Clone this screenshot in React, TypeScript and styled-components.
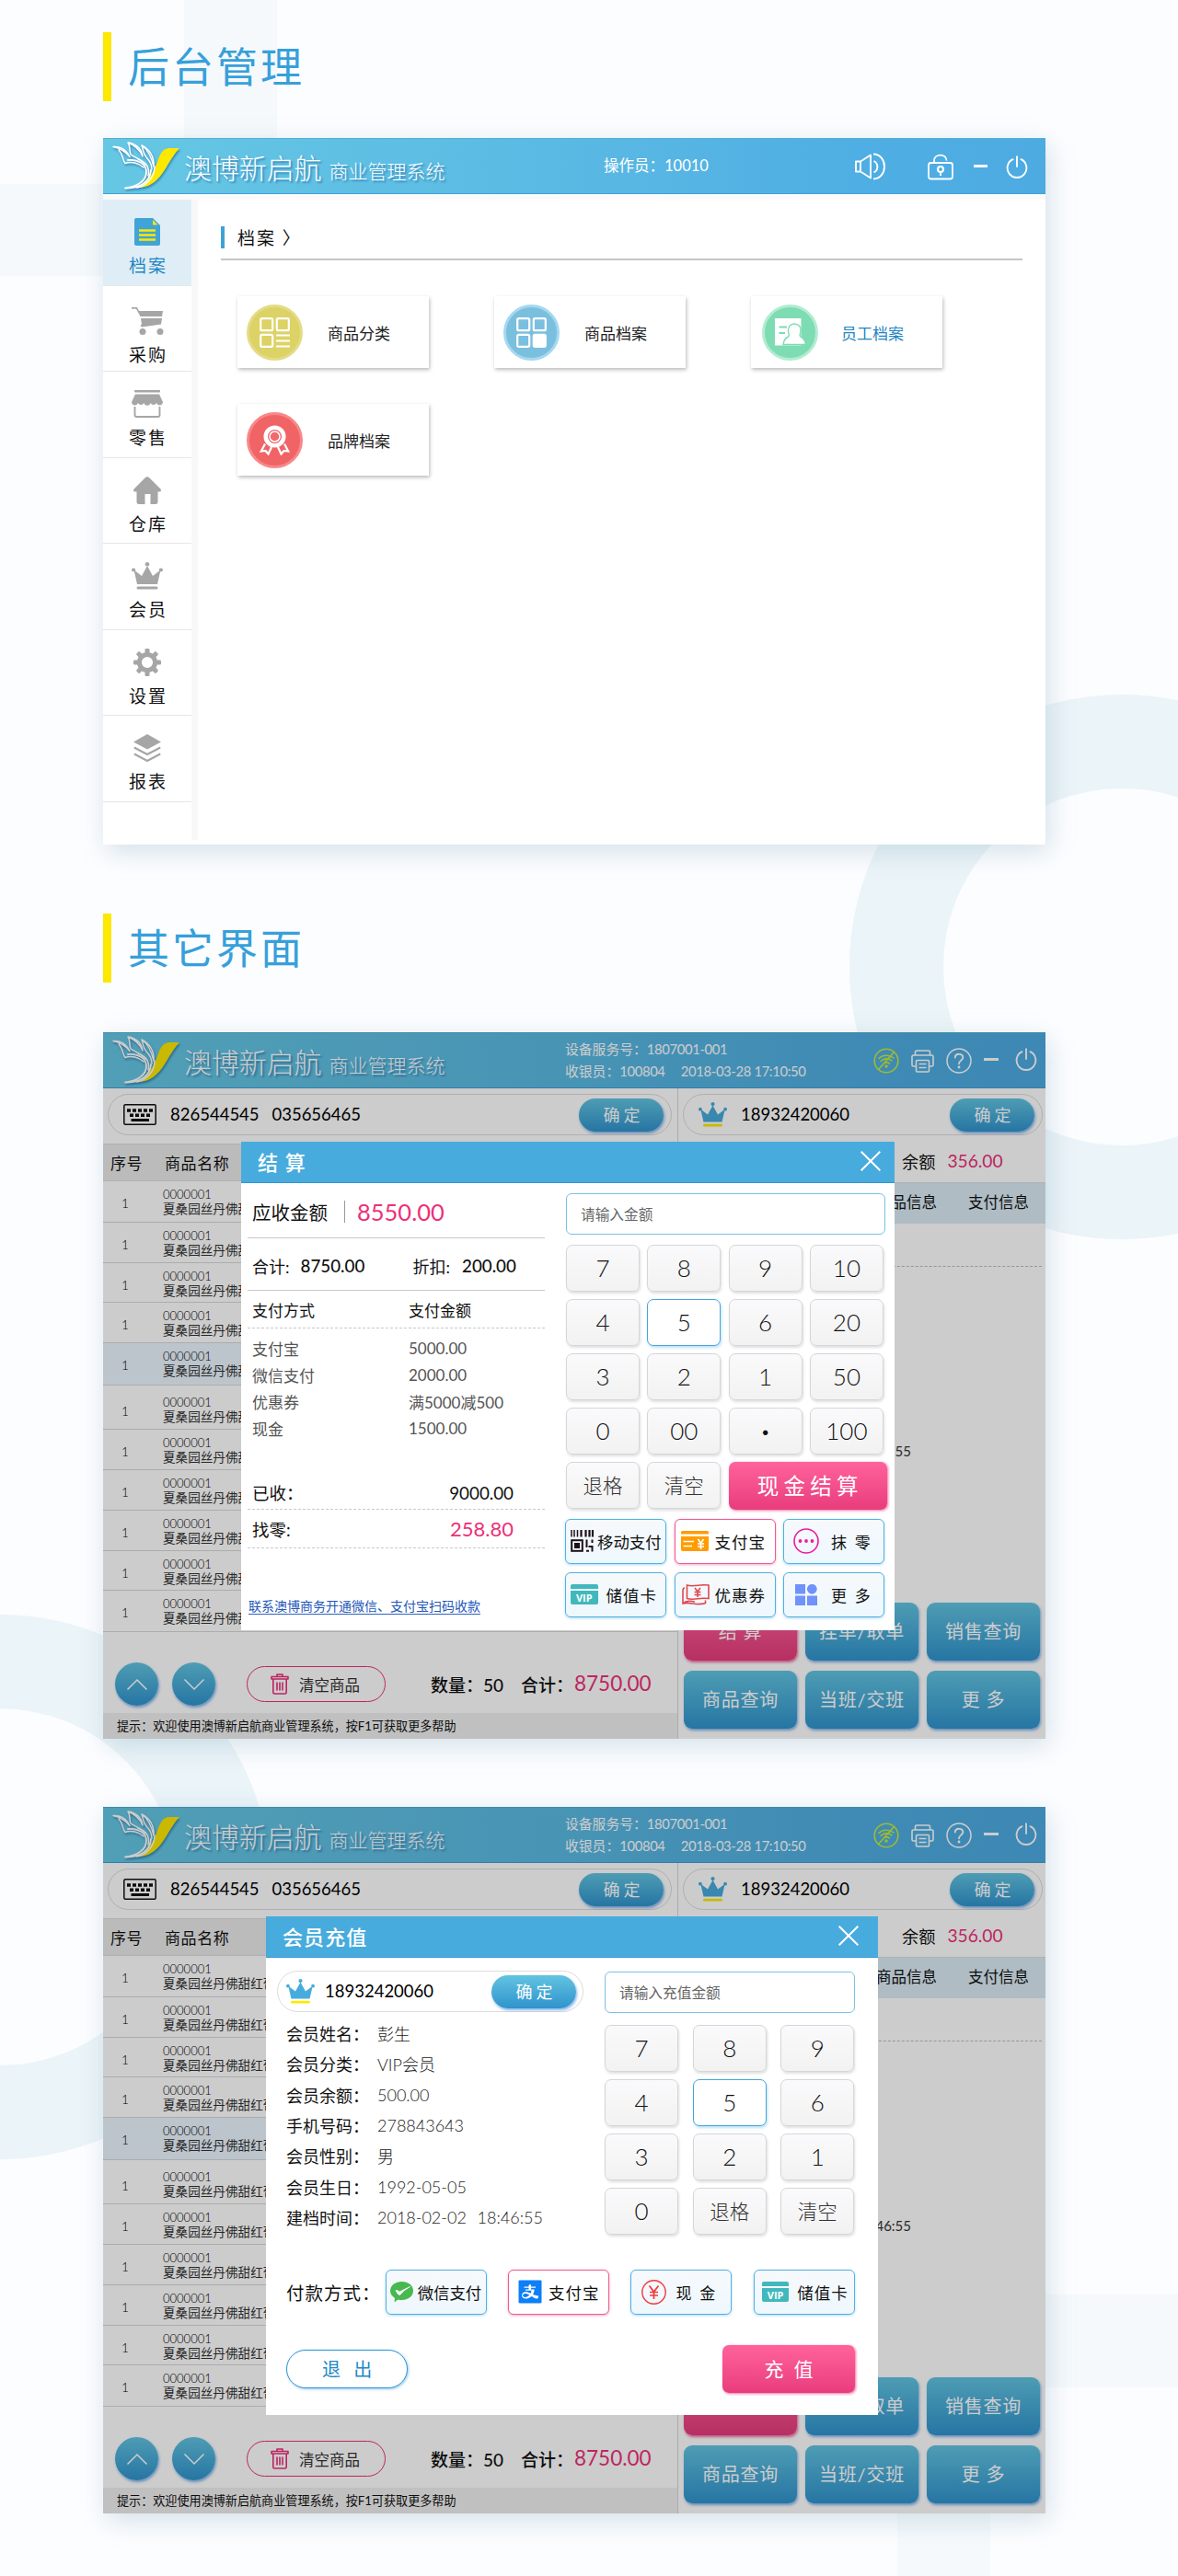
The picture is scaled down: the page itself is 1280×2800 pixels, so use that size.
import React from 'react';
import styled, { createGlobalStyle, css } from 'styled-components';
import { AiFillAlipaySquare } from 'react-icons/ai';

const blue = '#48abdd';
const pink = '#ee2f78';
const grey = '#a6a6a6';
const fonts = `Lato, 'Noto Sans CJK SC', sans-serif`;

const GlobalStyle = createGlobalStyle`
    * { box-sizing: border-box; }
    body {
        margin: 0;
        background: #fcfdff;
        font-family: ${fonts};
        font-weight: 400;
        color: #111;
    }
    svg { display: block; flex: none; }
`;

/* ---------- page ---------- */

const Page = styled.div`
    position: relative;
    width: 1280px;
    height: 2800px;
    padding: 35px 144px 0 112px;
    overflow: hidden;
`;

const Ring = styled.div<{ $x: number; $y: number }>`
    position: absolute;
    left: ${p => p.$x - 296}px;
    top: ${p => p.$y - 296}px;
    width: 592px;
    height: 592px;
    border: 102px solid #ebf4f8;
    border-radius: 50%;
`;

const Band = styled.div<{ $x: number; $y: number; $w: number; $h: number }>`
    position: absolute;
    left: ${p => p.$x}px;
    top: ${p => p.$y}px;
    width: ${p => p.$w}px;
    height: ${p => p.$h}px;
    background: #f5f9fc;
`;

const SectionTitle = styled.h2<{ $gap: number }>`
    position: relative;
    display: flex;
    align-items: center;
    height: 75px;
    margin: 0 0 ${p => p.$gap}px;
    padding-left: 18px;
    border-left: 9px solid #fde800;
    font-size: 45px;
    font-weight: 400;
    letter-spacing: 3px;
    line-height: 70px;
    color: #36a0da;
`;

const Screen = styled.section<{ $gap: number }>`
    position: relative;
    display: flex;
    flex-direction: column;
    width: 1024px;
    height: 768px;
    margin-bottom: ${p => p.$gap}px;
    background: #fff;
    box-shadow: 4px 8px 26px rgba(110, 155, 175, 0.28);
`;

/* ---------- top bar ---------- */

const TopBar = styled.header`
    display: flex;
    flex: none;
    height: 61px;
    padding-left: 10px;
    background: linear-gradient(90deg, #66c7e4, #5ab9e3 50%, #4faee3 80%, #4dabe2);
    border-bottom: 1px solid #3d9fd8;
    border-top: 1px solid #4fb0d2;
    color: #fff;
`;

const Brand = styled.div`
    display: flex;
    align-items: baseline;
    width: 492px;
    text-shadow: 2px 2px 2px rgba(20, 90, 150, 0.55);
    line-height: 62px;
    svg { align-self: flex-start; margin-top: 3px; }
`;

const BrandName = styled.span`
    margin-left: 2px;
    font-size: 30px;
    font-weight: 300;
    letter-spacing: -0.1px;
`;

const BrandSub = styled.span`
    margin-left: 8px;
    font-size: 21px;
    font-weight: 300;
`;

const TopInfo = styled.div<{ $size?: number; $left?: number }>`
    display: flex;
    flex-direction: column;
    justify-content: center;
    width: 335px;
    padding: 0 0 2px ${p => p.$left || 0}px;
    font-size: ${p => p.$size || 15}px;
    line-height: 24px;
    white-space: pre;
    span { letter-spacing: -0.35px; }
`;

const TopIcons = styled.div<{ $offset: number }>`
    display: flex;
    align-items: center;
    height: 60px;
    margin-left: ${p => p.$offset}px;
`;

const IconSlot = styled.span<{ $ml: number; $mt?: number }>`
    margin-left: ${p => p.$ml}px;
    margin-top: ${p => p.$mt || 0}px;
`;

const Logo = () => (
    <svg width="76" height="54" viewBox="0 0 76 54" style={{ filter: 'drop-shadow(1px 2px 1px rgba(20,90,150,.55))' }}>
        <path d="M57 8.500Q59 7 62 7H73C64 17 60 27 54 35C47 45 38 50 28 50C40 43 45 33 49 22C51 16 53 11 57 8.500Z" fill="#fde800" />
        <g fill="none" stroke="#fff" strokeWidth="1.500" strokeLinejoin="round" strokeLinecap="round">
            <path d="M1 5.500C7 5 13 7 17 13L19 16.500C14 10 8 7 1 5.500ZM7 9C12 14 11 20 14 23.500C20 21 29 23 34 28" />
            <path d="M17 1C26 2 32 8 33 16C30 9 25 4 17 1ZM17 1C20 5 18 9 20 14C24 17 30 18 36 25" />
            <path d="M32 4C40 8 46 16 45 27C43 18 40 10 32 4ZM32 4C34 9 33 12 37 17C41 21 43 25 43 30" />
            <path d="M17 20C28 19 37 24 37 33C37 42 28 49 14 50.500C30 51 41 44 42 31" strokeWidth="1.900" />
            <path d="M28 19C36 22 41 28 39 37M46 27C46 38 38 48 27 50" />
        </g>
    </svg>
);

const Power = ({ size = 24 }: { size?: number }) => (
    <svg width={size} height={size + 1} viewBox="0 0 24 25" fill="none" stroke="currentColor" strokeWidth="1.900" strokeLinecap="round">
        <path d="M7.500 4.200A10.400 10.400 0 1 0 16.500 4.200M12 1.200V12" />
    </svg>
);

const Minus = ({ width = 16 }: { width?: number }) => (
    <svg width={width} height="3" viewBox="0 0 16 3" preserveAspectRatio="none"><rect width="16" height="3" fill="currentColor" /></svg>
);

const Speaker = () => (
    <svg width="34" height="30" viewBox="0 0 34 30" fill="none" stroke="#fff" strokeWidth="1.900" strokeLinejoin="round">
        <path d="M1 9.500H6V20.500H1ZM6 9.500L17 2.500V27.500L6 20.500M20.500 9A7 7 0 0 1 20.500 21.500M20 1.500C36 2 36 28 20 28.500" />
    </svg>
);

const Lock = () => (
    <svg width="28" height="29" viewBox="0 0 28 29" fill="none" stroke="#fff" strokeWidth="1.800">
        <rect x="1" y="10" width="26" height="17.500" rx="2.500" />
        <path d="M7 10V7.500C7 0 20.500-.5 20.500 7.500" />
        <circle cx="14" cy="17" r="3" strokeWidth="2.200" />
        <path d="M14 19.500V24" strokeWidth="2" />
    </svg>
);

const NoWifi = () => (
    <svg width="28" height="28" viewBox="0 0 28 28" fill="none" stroke="#c4ea3c" strokeWidth="1.600" strokeLinecap="round">
        <circle cx="14" cy="14" r="12.800" />
        <path d="M6 11.500C10 7.500 17 7 22 11M8 14.500C12 11 16.500 11 20 14M10.500 17.500C13 15.500 15.500 15.500 17.500 17M22.500 4.500L5.500 23.500" />
        <circle cx="14" cy="20" r="1" fill="#c4ea3c" />
    </svg>
);

const Printer = () => (
    <svg width="25" height="25" viewBox="0 0 25 25" fill="none" stroke="currentColor" strokeWidth="1.600" strokeLinejoin="round">
        <path d="M4.500 6V2.500Q4.500 1 6 1H19Q20.500 1 20.500 2.500V6M5 18H2.500Q1 18 1 16.500V7.500Q1 6 2.500 6H22.500Q24 6 24 7.500V16.500Q24 18 22.500 18H20" />
        <rect x="5.500" y="11.500" width="14" height="12.500" rx="1" />
        <path d="M8.500 15.500H16.500M8.500 19.500H16.500" />
    </svg>
);

const Help = () => (
    <svg width="28" height="28" viewBox="0 0 28 28" fill="none" stroke="currentColor" strokeWidth="1.500" strokeLinecap="round">
        <circle cx="14" cy="14" r="13" />
        <path d="M9.800 10.500C10 5.500 18.300 5.700 18.300 10.500C18.300 13.500 14 13.800 14 17.200" strokeWidth="1.900" />
        <circle cx="14" cy="21" r=".7" fill="currentColor" />
    </svg>
);

const BrandBlock = () => (
    <Brand>
        <Logo />
        <BrandName>澳博新启航</BrandName>
        <BrandSub>商业管理系统</BrandSub>
    </Brand>
);

/* ---------- admin screen ---------- */

const AdminBody = styled.div`
    display: flex;
    height: 702px;
    border-top: 6px solid #fafafa;
`;

const Sidebar = styled.nav`
    width: 103px;
    border-right: 7px solid #f8f8f8;
`;

const SideItem = styled.div<{ $active?: boolean; $shift?: number }>`
    display: flex;
    flex-direction: column;
    align-items: center;
    height: 93.500px;
    padding-top: ${p => 20 + (p.$shift || 0)}px;
    border-bottom: 1px solid #e6e6e6;
    font-size: 19px;
    letter-spacing: 2px;
    line-height: 28px;
    color: ${p => (p.$active ? '#1f86c4' : '#111')};
    background: ${p => (p.$active ? '#dfeef6' : '#fff')};
    span { margin: 8px -2px 0 0; }
`;

const AdminMain = styled.main`
    flex: 1;
    padding: 29px 25px 0 25px;
`;

const Crumb = styled.div`
    display: flex;
    align-items: center;
    height: 37px;
    padding-bottom: 12px;
    border-bottom: 2px solid #c6c6c6;
    font-size: 19px;
    letter-spacing: 2px;
    &::before {
        content: '';
        width: 4px;
        height: 24px;
        margin-right: 14px;
        background: #3ea2d6;
    }
`;

const CardGrid = styled.div`
    display: grid;
    grid-template-columns: repeat(3, 208px);
    gap: 39px 71px;
    padding: 39px 0 0 18px;
`;

const FileCard = styled.div<{ $active?: boolean }>`
    display: flex;
    align-items: center;
    height: 78px;
    padding-left: ${p => (p.$active ? 12 : 10)}px;
    background: #fff;
    box-shadow: 1px 2px 4px rgba(0, 0, 0, 0.27);
    font-size: 17px;
    color: ${p => (p.$active ? '#1f86c4' : '#222')};
`;

const Round = styled.div<{ $bg: string; $ring: string; $gap: number }>`
    display: flex;
    align-items: center;
    justify-content: center;
    width: 61px;
    height: 61px;
    margin-right: ${p => p.$gap}px;
    border: 3px solid ${p => p.$ring};
    border-radius: 50%;
    background: ${p => p.$bg};
`;

const DocIcon = () => (
    <svg width="28" height="30" viewBox="0 0 28 30">
        <path d="M2 0H20L28 8V28Q28 30 26 30H2Q0 30 0 28V2Q0 0 2 0Z" fill="#40a4d8" />
        <path d="M20 2V7.500H25.500Z" fill="#fde800" />
        <path d="M5 13.500H23M5 18.500H23M5 23.500H23" stroke="#fde800" strokeWidth="2.400" />
    </svg>
);

const CartIcon = () => (
    <svg width="35" height="30" viewBox="0 0 35 30" fill={grey}>
        <path d="M0 0H6L8 4H34L33 10H9.500L5 1.800H0ZM10 12H33L32 18.500L11 21.500L9.500 19.500L11 18.500Z" />
        <circle cx="12" cy="26.500" r="3.500" /><circle cx="31" cy="26.500" r="3.500" />
    </svg>
);

const ShopIcon = () => (
    <svg width="34" height="30" viewBox="0 0 34 30" fill={grey}>
        <rect x="3" width="28" height="2.600" rx="1" />
        <path d="M4 4.500H30L34 13A3.600 3.600 0 0 1 27 14A3.600 3.600 0 0 1 20.500 14A3.600 3.600 0 0 1 13.500 14A3.600 3.600 0 0 1 7 14A3.600 3.600 0 0 1 0 13Z" />
        <path d="M3.500 18V27Q3.500 29 5.500 29H28.500Q30.500 29 30.500 27V18" fill="none" stroke={grey} strokeWidth="1.900" />
    </svg>
);

const HomeIcon = () => (
    <svg width="30" height="30" viewBox="0 0 30 30">
        <path d="M13 1Q15-.5 17 1L29.500 13.500Q31 16.500 28 16.500H26.500V28Q26.500 30 24 30H18.500V19H12.500V30H6Q3.500 30 3.500 28V16.500H2Q-1 16.500 .5 13.500Z" fill={grey} />
    </svg>
);

const CrownIcon = ({ color = grey, base = grey, width = 34, height = 30 }: { color?: string; base?: string; width?: number; height?: number }) => (
    <svg width={width} height={height} viewBox="0 0 34 30" preserveAspectRatio="none" fill={color}>
        <path d="M2.500 8.500L11 15L17 4L23 15L31.500 8.500L28 24H6Z" />
        <circle cx="17" cy="2.300" r="2.300" /><circle cx="2.100" cy="8.500" r="2.100" /><circle cx="31.900" cy="8.500" r="2.100" />
        <rect x="5.500" y="26.500" width="23" height="3" rx="1.500" fill={base} />
    </svg>
);

const GearIcon = () => (
    <svg width="30" height="30" viewBox="-15 -15 30 30" fill={grey}>
        {[0, 45, 90, 135, 180, 225, 270, 315].map(a => (
            <rect key={a} x="-2.500" y="-15" width="5" height="7" rx="1.300" transform={`rotate(${a})`} />
        ))}
        <circle r="8.600" fill="none" stroke={grey} strokeWidth="5" />
    </svg>
);

const LayersIcon = () => (
    <svg width="30" height="30" viewBox="0 0 30 30">
        <path d="M15 0L30 8.500L15 16.500L0 8.500Z" fill={grey} />
        <path d="M.8 14.500L15 22L29.200 14.500M.8 21.500L15 29L29.200 21.500" fill="none" stroke={grey} strokeWidth="2.200" />
    </svg>
);

const TilesIcon = ({ list }: { list?: boolean }) => (
    <svg width="33" height="33" viewBox="0 0 33 33" fill="none" stroke="#fff" strokeWidth="2.200">
        <rect x="1.200" y="1.200" width="13" height="13" rx="1.500" />
        <rect x="18.800" y="1.200" width="13" height="13" rx="1.500" />
        <rect x="1.200" y="18.800" width="13" height="13" rx="1.500" />
        {list
            ? <path d="M18 19.500H33M18 25.500H33M18 31.500H33" />
            : <rect x="18.800" y="18.800" width="13" height="13" rx="1.500" fill="#fff" />}
    </svg>
);

const StaffIcon = () => (
    <svg width="34" height="30" viewBox="0 0 34 30">
        <path d="M0 0H28.500V29.500H0Z" fill="#fff" />
        <path d="M4.500 9.500H13M4.500 16H11" stroke="#7ddcb2" strokeWidth="1.800" />
        <path d="M21 6C26 6 28.500 9.500 28 14C27.700 17 26 18.500 28 20C31.500 22 33 25 33.500 28.500H9C9.500 25 11 21.500 14.500 20C16.500 18.500 14.500 17 14.500 14C14.300 9.500 16.500 6 21 6Z" fill="#fff" stroke="#7ddcb2" strokeWidth="1.400" />
    </svg>
);

const MedalIcon = () => (
    <svg width="33" height="33" viewBox="0 0 33 33" fill="none" stroke="#fff">
        <circle cx="16.500" cy="12.500" r="9.800" strokeWidth="4.500" />
        <circle cx="16.500" cy="12.500" r="5.500" strokeWidth="1.500" fill="#f0696c" />
        <path d="M6 20.500L1.800 28.500L6.500 28L9.500 31.500L13 24M27 20.500L31.200 28.500L26.500 28L23.500 31.500L20 24" strokeWidth="2.200" />
    </svg>
);

const sideItems = [
    { label: '档案', icon: <DocIcon />, shift: 0 },
    { label: '采购', icon: <CartIcon />, shift: 3 },
    { label: '零售', icon: <ShopIcon />, shift: 0 },
    { label: '仓库', icon: <HomeIcon />, shift: 0 },
    { label: '会员', icon: <CrownIcon />, shift: 0 },
    { label: '设置', icon: <GearIcon />, shift: 0 },
    { label: '报表', icon: <LayersIcon />, shift: 0 },
];

const fileCards = [
    { label: '商品分类', bg: '#dcd266', ring: '#e3dc86', icon: <TilesIcon list /> },
    { label: '商品档案', bg: '#7bbfdf', ring: '#a5d8f0', icon: <TilesIcon /> },
    { label: '员工档案', bg: '#7ddcb2', ring: '#b2ecd2', icon: <StaffIcon /> },
    { label: '品牌档案', bg: '#f06466', ring: '#f88889', icon: <MedalIcon /> },
];

const AdminScreen = () => (
    <Screen $gap={75}>
        <TopBar>
            <BrandBlock />
            <TopInfo $size={16.500} $left={42}>操作员：10010</TopInfo>
            <TopIcons $offset={-20}>
                <Speaker />
                <IconSlot $ml={45}><Lock /></IconSlot>
                <IconSlot $ml={22} $mt={-1}><Minus width={15} /></IconSlot>
                <IconSlot $ml={20}><Power /></IconSlot>
            </TopIcons>
        </TopBar>
        <AdminBody>
            <Sidebar>
                {sideItems.map((item, i) => (
                    <SideItem key={item.label} $active={i === 0} $shift={item.shift}>
                        {item.icon}
                        <span>{item.label}</span>
                    </SideItem>
                ))}
            </Sidebar>
            <AdminMain>
                <Crumb>档案 〉</Crumb>
                <CardGrid>
                    {fileCards.map((card, i) => (
                        <FileCard key={card.label} $active={i === 2}>
                            <Round $bg={card.bg} $ring={card.ring} $gap={i === 2 ? 25 : 27}>{card.icon}</Round>
                            {card.label}
                        </FileCard>
                    ))}
                </CardGrid>
            </AdminMain>
        </AdminBody>
    </Screen>
);

/* ---------- POS screen ---------- */

const PosBody = styled.div`
    display: flex;
    flex: 1;
`;

const PosLeft = styled.div`
    display: flex;
    flex-direction: column;
    width: 624px;
`;

const PosRight = styled.div`
    display: flex;
    flex-direction: column;
    width: 400px;
    border-left: 1px solid #d8d8d8;
`;

const SearchRow = styled.div`
    height: 60px;
    padding: 6px 3px 0 5px;
`;

const Pill = styled.div<{ $pl: number; $width?: number }>`
    display: flex;
    align-items: center;
    width: ${p => (p.$width ? p.$width + 'px' : 'auto')};
    height: 45px;
    padding: 0 8px 0 ${p => p.$pl}px;
    border: 1px solid #dcdcdc;
    border-radius: 23px;
    font-size: 18.500px;
    color: #000;
    white-space: pre;
    > span { flex: 1; margin-left: 15px; padding-bottom: 2px; word-spacing: 2.200px; }
`;

const OkButton = styled.button`
    width: 92px;
    height: 36px;
    padding: 0 0 2px 5px;
    border: 0;
    border-radius: 18px;
    background: linear-gradient(#62c4e1, #3093cd);
    box-shadow: 1px 2px 3px rgba(50, 130, 220, 0.6);
    font: 400 18px ${fonts};
    letter-spacing: 4px;
    color: #fff;
`;

const TableHead = styled.div`
    display: flex;
    align-items: center;
    height: 41px;
    padding: 0 0 1px 8px;
    border-top: 1px solid #dcdcdc;
    border-bottom: 1px solid #dcdcdc;
    background: #eaeaea;
    font-size: 17px;
    letter-spacing: 0.6px;
    span { width: 59px; }
`;

const TableRow = styled.div<{ $height: number; $active: boolean; $drop: number }>`
    display: flex;
    height: ${p => p.$height}px;
    padding: ${p => 6 + p.$drop}px 0 0 20px;
    border-bottom: 1px solid #d8d8d8;
    background: ${p => (p.$active ? '#ebf6ff' : 'transparent')};
    font-size: 13.600px;
    line-height: 16px;
    color: #222;
`;

const RowNo = styled.span`
    width: 45px;
    padding-top: 10px;
    font-weight: 300;
    color: #000;
`;

const RowName = styled.span`
    display: flex;
    flex-direction: column;
    color: #333;
    em { font-size: 13px; font-style: normal; font-weight: 300; color: #000; }
`;

const FootBar = styled.div`
    display: flex;
    align-items: center;
    height: 88px;
    padding: 25px 0 0 13px;
    font-size: 19px;
    font-weight: 500;
    b { margin: 0 0 2px 1px; font-size: 22.500px; font-weight: 400; color: ${pink}; }
    span { width: 98px; }
`;

const RoundButton = styled.button`
    display: flex;
    align-items: center;
    justify-content: center;
    width: 47px;
    height: 47px;
    margin-right: 15px;
    padding: 0;
    border: 0;
    border-radius: 50%;
    background: linear-gradient(#62c4e1, #3093cd);
    box-shadow: 1px 2px 3px rgba(50, 130, 220, 0.6);
`;

const ClearButton = styled.button`
    display: flex;
    align-items: center;
    gap: 11px;
    width: 151px;
    height: 39px;
    margin: 0 49px 0 19px;
    padding: 0 0 0 25px;
    border: 1px solid ${pink};
    border-radius: 20px;
    background: none;
    font: 400 16.500px ${fonts};
    color: #333;
`;

const TipBar = styled.div`
    height: 28px;
    padding-left: 15px;
    background: #f0f0f0;
    font-size: 13.100px;
    line-height: 28px;
`;

const Balance = styled.div`
    display: flex;
    align-items: center;
    height: 42px;
    padding: 0 0 5px 243px;
    font-size: 18.200px;
    b { margin-left: 13px; font-size: 19.200px; font-weight: 400; color: ${pink}; }
`;

const InfoTabs = styled.div`
    display: flex;
    justify-content: flex-end;
    gap: 34px;
    height: 45px;
    padding-right: 18px;
    border-top: 1px solid #d4e0e8;
    background: #dbebf5;
    font-size: 16.500px;
    line-height: 43px;
`;

const InfoLine = styled.div`
    height: 47px;
    margin: 0 4px;
    border-bottom: 1px dashed #bcbcbc;
`;

const InfoTime = styled.div`
    height: 365px;
    padding: 191px 146px 0 0;
    font-size: 15px;
    line-height: 18px;
    text-align: right;
    color: #333;
`;

const ActionGrid = styled.div`
    display: grid;
    grid-template-columns: repeat(3, 123px);
    grid-auto-rows: 63px;
    gap: 11px 9px;
    padding-left: 6px;
`;

const ActionButton = styled.button<{ $pink?: boolean }>`
    padding: 0 0 2px;
    border: 0;
    border-radius: 9px;
    background: ${p => (p.$pink ? 'linear-gradient(#ff639b, #e63c7c)' : 'linear-gradient(#62c4e1, #3093cd)')};
    box-shadow: 1px 2px 3px ${p => (p.$pink ? 'rgba(230, 50, 120, .7)' : 'rgba(50, 130, 220, .6)')};
    font: 400 20px ${fonts};
    letter-spacing: 0.8px;
    white-space: pre;
    color: #fff;
`;

const Shade = styled.div`
    position: absolute;
    inset: 0;
    background: rgba(0, 0, 0, 0.2);
`;

const KeyboardIcon = () => (
    <svg width="36" height="23" viewBox="0 0 36 23">
        <rect x=".8" y=".8" width="34.400" height="21.400" rx="1.500" fill="none" stroke="#111" strokeWidth="1.500" />
        <path d="M4 7H33M7 12.200H30" stroke="#111" strokeWidth="3.600" strokeDasharray="4 2" />
        <path d="M8.500 17.500H28" stroke="#111" strokeWidth="3" />
    </svg>
);

const TrashIcon = () => (
    <svg width="20" height="23" viewBox="0 0 20 23" fill="none" stroke={pink} strokeWidth="1.600" strokeLinejoin="round">
        <path d="M1 6V3.500H19V6ZM7 3.500V1H13V3.500M2.800 6V20.500Q2.800 22 4.300 22H15.700Q17.200 22 17.200 20.500V6M7 9.500V18.500M10 9.500V18.500M13 9.500V18.500" />
    </svg>
);

const Chevron = ({ up }: { up?: boolean }) => (
    <svg width="24" height="14" viewBox="0 0 24 14" fill="none" stroke="#fff" strokeWidth="1.500">
        <path d={up ? 'M1.500 12.500L12 2L22.500 12.500' : 'M1.500 1.500L12 12L22.500 1.500'} />
    </svg>
);

const rowHeights = [45, 44, 43, 44, 46, 48, 44, 44, 44, 43, 45];

const PosScreen = ({ gap, product, time, children }: { gap: number; product: string; time: string; children: React.ReactNode }) => (
    <Screen $gap={gap}>
        <TopBar>
            <BrandBlock />
            <TopInfo $size={14.800}>
                <div>设备服务号：<span>1807001-001</span></div>
                <div>收银员：<span>100804{'     '}2018-03-28 17:10:50</span></div>
            </TopInfo>
            <TopIcons $offset={0}>
                <NoWifi />
                <IconSlot $ml={13}><Printer /></IconSlot>
                <IconSlot $ml={13}><Help /></IconSlot>
                <IconSlot $ml={13} $mt={-4}><Minus /></IconSlot>
                <IconSlot $ml={18} $mt={-3}><Power /></IconSlot>
            </TopIcons>
        </TopBar>
        <PosBody>
            <PosLeft>
                <SearchRow>
                    <Pill $pl={16} $width={613}>
                        <KeyboardIcon />
                        <span>826544545{'  '}035656465</span>
                        <OkButton>确定</OkButton>
                    </Pill>
                </SearchRow>
                <TableHead><span>序号</span>商品名称</TableHead>
                {rowHeights.map((height, i) => (
                    <TableRow key={i} $height={height} $active={i === 4} $drop={i === 5 ? 4 : 0}>
                        <RowNo>1</RowNo>
                        <RowName><em>0000001</em>{product}</RowName>
                    </TableRow>
                ))}
                <FootBar>
                    <RoundButton><Chevron up /></RoundButton>
                    <RoundButton><Chevron /></RoundButton>
                    <ClearButton><TrashIcon />清空商品</ClearButton>
                    <span>数量：50</span>
                    合计：<b>8750.00</b>
                </FootBar>
                <TipBar>提示：欢迎使用澳博新启航商业管理系统，按F1可获取更多帮助</TipBar>
            </PosLeft>
            <PosRight>
                <SearchRow>
                    <Pill $pl={16}>
                        <CrownIcon color={blue} base="#fde800" width={31} height={27} />
                        <span>18932420060</span>
                        <OkButton>确定</OkButton>
                    </Pill>
                </SearchRow>
                <Balance>余额<b>356.00</b></Balance>
                <InfoTabs><span>商品信息</span><span>支付信息</span></InfoTabs>
                <InfoLine />
                <InfoTime>{time}</InfoTime>
                <ActionGrid>
                    <ActionButton $pink>结 算</ActionButton>
                    <ActionButton>挂单/取单</ActionButton>
                    <ActionButton>销售查询</ActionButton>
                    <ActionButton>商品查询</ActionButton>
                    <ActionButton>当班/交班</ActionButton>
                    <ActionButton>更 多</ActionButton>
                </ActionGrid>
            </PosRight>
        </PosBody>
        <Shade />
        {children}
    </Screen>
);

/* ---------- dialogs ---------- */

const Dialog = styled.div<{ $left: number; $width: number; $height: number }>`
    position: absolute;
    left: ${p => p.$left}px;
    top: 119px;
    width: ${p => p.$width}px;
    height: ${p => p.$height}px;
    background: #fff;
`;

const DialogHead = styled.div<{ $right: number }>`
    display: flex;
    align-items: center;
    justify-content: space-between;
    height: 45px;
    padding: 0 ${p => p.$right}px 2px 18px;
    border-bottom: 1px solid #3398d2;
    background: ${blue};
    font-size: 22px;
    font-weight: 500;
    letter-spacing: 1.100px;
    white-space: pre;
    color: #fff;
`;

const CloseIcon = () => (
    <svg width="22" height="22" viewBox="0 0 22 22" stroke="#fff" strokeWidth="2"><path d="M.7.7L21.300 21.300M21.300.7L.7 21.300" /></svg>
);

const DialogCols = styled.div`
    display: flex;
`;

const keyBase = css`
    display: flex;
    align-items: center;
    justify-content: center;
    padding: 0 0 2px;
    border-radius: 7px;
    font-family: ${fonts};
    white-space: pre;
`;

const AmountInput = styled.div<{ $width: number; $top: number }>`
    display: flex;
    align-items: center;
    width: ${p => p.$width}px;
    height: 45px;
    margin-top: ${p => p.$top}px;
    padding: 0 0 1px 15px;
    border: 1px solid #7cc0e4;
    border-radius: 6px;
    font-size: 15.700px;
    color: #666;
`;

const KeyGrid = styled.div<{ $cols: number; $gap: number; $top: number }>`
    display: grid;
    grid-template-columns: repeat(${p => p.$cols}, 80px);
    grid-auto-rows: 51px;
    gap: 8px ${p => p.$gap}px;
    margin-top: ${p => p.$top}px;
`;

const Key = styled.button<{ $active?: boolean; $text?: boolean; $bold?: boolean }>`
    ${keyBase}
    border: 1px solid ${p => (p.$active ? '#45a6dc' : '#d6d6d6')};
    background: ${p => (p.$active ? '#fff' : 'linear-gradient(#fafafc, #f2f2f2)')};
    box-shadow: 1px 2px 3px ${p => (p.$active ? 'rgba(70, 166, 220, .35)' : 'rgba(0, 0, 0, .13)')};
    font-size: ${p => (p.$text ? 21.500 : 26)}px;
    font-weight: ${p => (p.$bold ? 900 : 300)};
    color: ${p => (p.$text ? '#333' : '#111')};
`;

const PinkButton = styled.button<{ $width: number; $size: number; $spacing: number }>`
    ${keyBase}
    width: ${p => p.$width}px;
    height: 52px;
    border: 0;
    background: linear-gradient(#ff639b, #e93c7d);
    box-shadow: 1px 1px 3px rgba(230, 50, 120, 0.7);
    font-size: ${p => p.$size}px;
    letter-spacing: ${p => p.$spacing}px;
    text-indent: ${p => p.$spacing}px;
    color: #fff;
`;

const PayGrid = styled.div`
    display: grid;
    grid-template-columns: repeat(3, 110px);
    grid-auto-rows: 49px;
    gap: 9px 8.500px;
    margin: 11px 0 0 -1px;
`;

const PayButton = styled.button<{ $active?: boolean; $pl?: number; $gap?: number; $size?: number; $spacing?: number }>`
    display: flex;
    align-items: center;
    gap: ${p => p.$gap || 6}px;
    padding: 0 0 1px ${p => p.$pl || 5}px;
    border: 1px solid ${p => (p.$active ? '#ee5a94' : '#52b0e0')};
    border-radius: 6px;
    background: ${p => (p.$active ? '#fff' : 'linear-gradient(#f7f9fc, #edf8fe)')};
    box-shadow: 0 1px 3px ${p => (p.$active ? 'rgba(238, 60, 130, .45)' : 'rgba(72, 171, 221, .45)')};
    font: 400 ${p => p.$size || 17.500}px ${fonts};
    letter-spacing: ${p => p.$spacing || 0}px;
    white-space: pre;
    color: #111;
`;

const BarcodeIcon = () => (
    <svg width="25" height="24" viewBox="0 0 25 24" fill="none" stroke="#1d1018">
        <path d="M1 0V7.500M4 0V7.500M7.500 0V7.500" strokeWidth="1.500" />
        <path d="M11.500 0V7.500M16.500 0V7.500M20.500 0V7.500M24 0V7.500" strokeWidth="2.200" />
        <rect x="1.200" y="11.200" width="11.600" height="11.600" strokeWidth="2" />
        <rect x="4.500" y="14.500" width="5" height="5" fill="#1d1018" />
        <path d="M17.500 10.500V19M17 22.800H20M23.500 10.500V14M23.500 17V23.500M19.500 18H23" strokeWidth="2" />
    </svg>
);

const YuanCardIcon = () => (
    <svg width="30" height="22" viewBox="0 0 30 22">
        <path d="M0 3.500V1.500Q0 0 1.500 0H28.500Q30 0 30 1.500V3.500ZM0 6H30V20Q30 22 28.500 22H1.500Q0 22 0 20Z" fill="#ff9c00" />
        <path d="M2.500 11.500H14M2.500 16.500H12M18.500 9L21.500 13.500L24.500 9M21.500 13V20M18 14H25M18 17H25" fill="none" stroke="#fff" strokeWidth="1.700" />
    </svg>
);

const DotsIcon = () => (
    <svg width="28" height="28" viewBox="0 0 28 28" fill="#ee1c9c">
        <circle cx="14" cy="14" r="13" fill="none" stroke="#ee1c9c" strokeWidth="1.600" />
        <circle cx="7.500" cy="14" r="1.900" /><circle cx="14" cy="14" r="1.900" /><circle cx="20.500" cy="14" r="1.900" />
    </svg>
);

const VipBadge = styled.span`
    width: 29.500px;
    height: 22px;
    padding-top: 2.500px;
    border-top: 5px solid #40b8bd;
    border-radius: 2px;
    background: linear-gradient(#f5f9fc 2.500px, #40b8bd 2.500px);
    font: 700 11px/14px 'Open Sans', sans-serif;
    letter-spacing: 0;
    text-align: center;
    color: #fff;
`;

const CouponIcon = () => (
    <svg width="30" height="24" viewBox="0 0 30 24" fill="none" stroke="#e2474d" strokeWidth="1.600">
        <path d="M5.500 2C13 4.500 20 .5 29 2V16.500C20 15 13 19 5.500 16.500Z" />
        <path d="M3 5C1 5 1 7 1 8V22C9 19.500 16 25 25.500 21.500V18.500M1 22C6 17 10 20 14 20" />
        <path d="M14 5L17 9L20 5M17 8.500V15M13.500 9.500H20.500M13.500 12.500H20.500" />
    </svg>
);

const MoreIcon = () => (
    <svg width="24" height="23" viewBox="0 0 24 23" fill="#6f92fb">
        <rect width="11" height="10.500" /><circle cx="18.300" cy="5.300" r="5.400" />
        <rect y="12.500" width="11" height="10.500" /><rect x="13" y="12.500" width="11" height="10.500" />
    </svg>
);

const WechatIcon = () => (
    <svg width="25" height="23" viewBox="0 0 25 23">
        <path d="M12.500 0C19.500 0 25 4.300 25 10S19.500 20 12.500 20Q10.500 20 8.500 19.500L4.500 22.500L5 18C2 16 0 13 0 10C0 4.300 5.500 0 12.500 0Z" fill="#47b94f" />
        <path d="M6 9.500Q8 9 10 11.200L21.500 5.500Q15 9 10.500 14.500Q8.500 15 6 9.500Z" fill="#fff" stroke="#fff" strokeWidth=".8" />
    </svg>
);

const AlipayIcon = styled(AiFillAlipaySquare)`
    width: 32px;
    height: 32px;
    margin: 0 -4px;
    color: #0d7ff8;
`;

const YuanRingIcon = () => (
    <svg width="27" height="27" viewBox="0 0 27 27" fill="none" stroke="#f4383a" strokeWidth="1.400">
        <circle cx="13.500" cy="13.500" r="12.700" />
        <path d="M8.500 6.500L13.500 13L18.500 6.500M13.500 13V21M9 13.500H18M9 17H18" strokeWidth="1.700" />
    </svg>
);

const Bill = styled.div`
    width: 353px;
    padding-left: 7px;
    color: #111;
`;

const BillLine = styled.div<{ $height: number; $line?: string; $size?: number; $color?: string; $pad?: number }>`
    display: flex;
    align-items: center;
    width: 323px;
    height: ${p => p.$height}px;
    padding: ${p => p.$pad || 0}px 0 0 5px;
    border-bottom: ${p => p.$line || '0 solid'} #c9c9c9;
    font-size: ${p => p.$size || 17}px;
    color: ${p => p.$color || '#111'};
`;

const Cell = styled.span<{ $width: number }>`
    width: ${p => p.$width}px;
`;

const Num = styled.span<{ $size: number; $color?: string; $weight?: number; $right?: boolean }>`
    flex: ${p => (p.$right ? 1 : 'none')};
    padding-right: ${p => (p.$right ? 34 : 0)}px;
    font-size: ${p => p.$size}px;
    font-weight: ${p => p.$weight || 400};
    text-align: ${p => (p.$right ? 'right' : 'left')};
    color: ${p => p.$color || 'inherit'};
`;

const VBar = styled.i`
    width: 1px;
    height: 24px;
    margin: 0 13px 0 18px;
    background: #999;
`;

const BillLink = styled.a`
    display: inline-block;
    margin: 54px 0 0 1px;
    border-bottom: 1px solid #2f62bd;
    font-size: 14px;
    line-height: 17px;
    color: #2458b8;
`;

const payments = [
    ['支付宝', '5000.00'],
    ['微信支付', '2000.00'],
    ['优惠券', '满5000减500'],
    ['现金', '1500.00'],
];

const CheckoutDialog = () => (
    <Dialog $left={150} $width={710} $height={531}>
        <DialogHead $right={15}>结 算<CloseIcon /></DialogHead>
        <DialogCols>
            <Bill>
                <BillLine $height={60} $line="1px solid" $size={20.500} $pad={2}>
                    应收金额<VBar /><Num $size={25.500} $color={pink}>8550.00</Num>
                </BillLine>
                <BillLine $height={57} $line="1px solid" $size={18} $pad={3}>
                    <Cell $width={52.500}>合计:</Cell><Cell $width={122}><Num $size={18.800} $weight={500}>8750.00</Num></Cell>
                    <Cell $width={53.500}>折扣:</Cell><Num $size={18.800} $weight={500}>200.00</Num>
                </BillLine>
                <BillLine $height={41} $line="1px dashed">
                    <Cell $width={170}>支付方式</Cell>支付金额
                </BillLine>
                <BillLine $height={7} />
                {payments.map(([name, sum]) => (
                    <BillLine key={name} $height={29} $color="#555"><Cell $width={170}>{name}</Cell>{sum}</BillLine>
                ))}
                <BillLine $height={74} $line="1px dashed" $size={18.500} $pad={37}>
                    已收：<Num $size={18.800} $right>9000.00</Num>
                </BillLine>
                <BillLine $height={42} $line="1px dashed" $size={18.500}>
                    找零:<Num $size={22} $color={pink} $right>258.80</Num>
                </BillLine>
                <BillLink>联系澳博商务开通微信、支付宝扫码收款</BillLink>
            </Bill>
            <div>
                <AmountInput $width={347} $top={11}>请输入金额</AmountInput>
                <KeyGrid $cols={4} $gap={8.300} $top={11}>
                    {['7', '8', '9', '10', '4', '5', '6', '20', '3', '2', '1', '50', '0', '00', '·', '100'].map(k => (
                        <Key key={k} $active={k === '5'} $bold={k === '·'}>{k}</Key>
                    ))}
                    <Key $text>退格</Key>
                    <Key $text>清空</Key>
                    <PinkButton $width={172} $size={23.500} $spacing={5.300}>现金结算</PinkButton>
                </KeyGrid>
                <PayGrid>
                    <PayButton $gap={4} $size={17.400}><BarcodeIcon />移动支付</PayButton>
                    <PayButton $active $pl={6} $gap={7} $spacing={1}><YuanCardIcon />支付宝</PayButton>
                    <PayButton $pl={10} $gap={13} $size={17}><DotsIcon />抹{'  '}零</PayButton>
                    <PayButton $gap={9} $spacing={1}><VipBadge>VIP</VipBadge>储值卡</PayButton>
                    <PayButton $pl={7} $gap={6} $spacing={1}><CouponIcon />优惠券</PayButton>
                    <PayButton $pl={12} $gap={15} $size={17}><MoreIcon />更{'  '}多</PayButton>
                </PayGrid>
            </div>
        </DialogCols>
    </Dialog>
);

const Member = styled.div`
    width: 368px;
    padding: 14px 0 0 12px;
`;

const MemberPill = styled(Pill)`
    padding-right: 7px;
    > span { margin-left: 11px; }
`;

const Field = styled.div`
    display: flex;
    align-items: center;
    height: 33.450px;
    padding-left: 10px;
    font-size: 18px;
    font-weight: 300;
    white-space: pre;
    word-spacing: 1px;
    color: #222;
    label { width: 99px; font-weight: 400; color: #111; }
`;

const FieldList = styled.div`
    margin-top: 6px;
`;

const PayRow = styled.div`
    display: flex;
    align-items: center;
    height: 49px;
    margin: 38px 0 0 22px;
    font-size: 19.500px;
    letter-spacing: 1px;
    > label { width: 84.300px; white-space: nowrap; }
    > button { width: 110px; height: 49px; margin-left: 23.400px; }
`;

const DialogFoot = styled.div`
    display: flex;
    align-items: center;
    justify-content: space-between;
    margin: 33px 25px 0 22px;
`;

const ExitButton = styled.button`
    width: 132px;
    height: 42px;
    padding: 0 0 1px;
    border: 1px solid #2d96d4;
    border-radius: 21px;
    background: #fff;
    box-shadow: 1px 1px 3px rgba(45, 150, 212, 0.5);
    font: 400 20px ${fonts};
    word-spacing: 2px;
    white-space: pre;
    color: #1f88c8;
`;

const member = [
    ['会员姓名：', '彭生'],
    ['会员分类：', 'VIP会员'],
    ['会员余额：', '500.00'],
    ['手机号码：', '278843643'],
    ['会员性别：', '男'],
    ['会员生日：', '1992-05-05'],
    ['建档时间：', '2018-02-02  18:46:55'],
];

const RechargeDialog = () => (
    <Dialog $left={177} $width={665} $height={542}>
        <DialogHead $right={21}>会员充值<CloseIcon /></DialogHead>
        <DialogCols>
            <Member>
                <MemberPill $pl={9} $width={333}>
                    <CrownIcon color={blue} base="#fde800" width={31} height={27} />
                    <span>18932420060</span>
                    <OkButton>确定</OkButton>
                </MemberPill>
                <FieldList>
                    {member.map(([name, value]) => (
                        <Field key={name}><label>{name}</label>{value}</Field>
                    ))}
                </FieldList>
            </Member>
            <div>
                <AmountInput $width={272} $top={15}>请输入充值金额</AmountInput>
                <KeyGrid $cols={3} $gap={15.700} $top={13}>
                    {['7', '8', '9', '4', '5', '6', '3', '2', '1', '0'].map(k => (
                        <Key key={k} $active={k === '5'}>{k}</Key>
                    ))}
                    <Key $text>退格</Key>
                    <Key $text>清空</Key>
                </KeyGrid>
            </div>
        </DialogCols>
        <PayRow>
            <label>付款方式：</label>
            <PayButton $pl={4} $gap={5} $size={17.400}><WechatIcon />微信支付</PayButton>
            <PayButton $active $pl={11} $gap={8} $spacing={1}><AlipayIcon />支付宝</PayButton>
            <PayButton $pl={11} $gap={10} $size={17}><YuanRingIcon />现{'  '}金</PayButton>
            <PayButton $pl={8} $gap={9} $spacing={1}><VipBadge>VIP</VipBadge>储值卡</PayButton>
        </PayRow>
        <DialogFoot>
            <ExitButton>退{'  '}出</ExitButton>
            <PinkButton $width={144} $size={21} $spacing={0}>充{'  '}值</PinkButton>
        </DialogFoot>
    </Dialog>
);

const App = () => (
    <Page>
        <GlobalStyle />
        <Band $x={200} $y={0} $w={101} $h={200} />
        <Band $x={0} $y={200} $w={200} $h={100} />
        <Band $x={1076} $y={2494} $w={204} $h={101} />
        <Band $x={975} $y={2595} $w={101} $h={205} />
        <Ring $x={1219} $y={1051} />
        <Ring $x={-1} $y={2051} />
        <SectionTitle $gap={40}>后台管理</SectionTitle>
        <AdminScreen />
        <SectionTitle $gap={54}>其它界面</SectionTitle>
        <PosScreen gap={74} product="夏桑园丝丹佛甜" time="55"><CheckoutDialog /></PosScreen>
        <PosScreen gap={0} product="夏桑园丝丹佛甜红葡" time="46:55"><RechargeDialog /></PosScreen>
    </Page>
);

export default App;
